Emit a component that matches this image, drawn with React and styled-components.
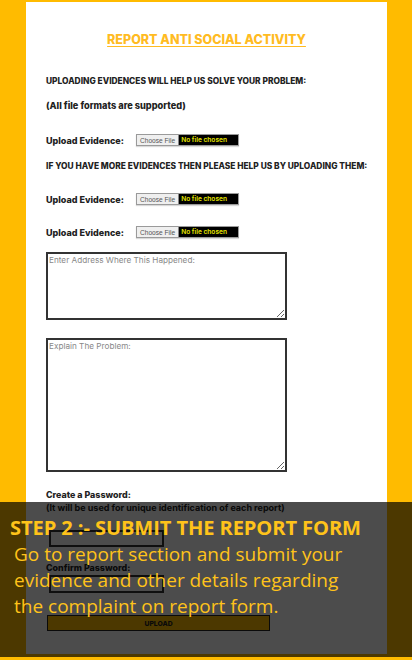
import React from "react"
import styled, { createGlobalStyle } from "styled-components"

const GlobalStyle = createGlobalStyle`
  html, body {
    margin: 0;
    padding: 0;
    background: #ffbb00;
  }
  * {
    box-sizing: border-box;
  }
`

const Page = styled.div`
  position: relative;
  width: 412px;
  height: 660px;
  overflow: hidden;
  background: #ffbb00;
  padding-top: 2px;
`

const Card = styled.div`
  display: flex;
  flex-direction: column;
  align-items: flex-start;
  margin-left: 26px;
  width: 361px;
  height: 652px;
  background: #fff;
  padding: 30px 0 0 20px;
  font-family: "Inter", "Open Sans", sans-serif;
`

const Title = styled.h1`
  align-self: center;
  margin: 0 0 0 -20px;
  font-size: 12.5px;
  line-height: 16px;
  font-weight: 800;
  color: #ffbb22;
  text-decoration: underline;
  text-underline-offset: 2px;
`

const Note = styled.p`
  margin: ${(p) => p.$top}px 0 0;
  font-size: ${(p) => p.$size || 8.4}px;
  line-height: 12px;
  font-weight: ${(p) => p.$weight || 800};
  color: #222;
  white-space: nowrap;
`

const UploadRow = styled.div`
  display: flex;
  align-items: center;
  margin-top: ${(p) => p.$top}px;
  height: 14px;
`

const Label = styled.span`
  width: 90px;
  font-size: 9px;
  font-weight: 800;
  color: #222;
`

const FileBox = styled.div`
  display: flex;
  height: 12px;
  border: 1px solid #9a9a9a;
  box-shadow: 0 1px 1px rgba(0, 0, 0, 0.15);
`

const ChooseButton = styled.span`
  display: flex;
  align-items: center;
  padding: 0 3px;
  background: #efefef;
  font-family: "Liberation Sans", sans-serif;
  font-size: 6.6px;
  color: #555;
  border-right: 1px solid #888;
`

const Chosen = styled.span`
  display: flex;
  align-items: center;
  padding: 0 3px 0 2px;
  width: 59px;
  background: #000;
  font-size: 6.6px;
  font-weight: 600;
  color: #e6e600;
`

const TextArea = styled.textarea`
  margin-top: ${(p) => p.$top}px;
  width: 241px;
  height: ${(p) => p.$height}px;
  border: 2px solid #333;
  padding: 1px;
  font-family: "Inter", sans-serif;
  font-size: 8.2px;
  resize: vertical;
  background: #fff;

  &::placeholder {
    color: #888;
  }
`

const PasswordInput = styled.input`
  margin: ${(p) => p.$top}px 0 0 3px;
  width: 115px;
  height: ${(p) => p.$height}px;
  border: 2px solid #333;
  background: #fff;
`

const SubmitButton = styled.button`
  margin: 22px 0 0 1px;
  width: 223px;
  height: 16px;
  border: 1.5px solid #222;
  background: #ffbb00;
  font-family: "Inter", sans-serif;
  font-size: 6.8px;
  font-weight: 800;
  color: #222;
  padding: 0;
`

const Overlay = styled.div`
  position: absolute;
  left: 0;
  top: 502px;
  width: 412px;
  height: 155px;
  background: rgba(0, 0, 0, 0.7);
  padding: 12px 0 0 10px;
  font-family: "Open Sans", sans-serif;
  color: #ffc31a;
`

const StepTitle = styled.h2`
  margin: 0;
  font-size: 20.1px;
  line-height: 27px;
  font-weight: 700;
  letter-spacing: -0.1px;
`

const StepText = styled.p`
  margin: 0 0 0 4px;
  font-size: 19px;
  line-height: 26px;
  font-weight: 400;
  width: 345px;
`

const Upload = ({ top }) => (
  <UploadRow $top={top}>
    <Label>Upload Evidence:</Label>
    <FileBox>
      <ChooseButton>Choose File</ChooseButton>
      <Chosen>No file chosen</Chosen>
    </FileBox>
  </UploadRow>
)

export default function App() {
  return (
    <Page>
      <GlobalStyle />
      <Card>
        <Title>REPORT ANTI SOCIAL ACTIVITY</Title>
        <Note $top={27}>UPLOADING EVIDENCES WILL HELP US SOLVE YOUR PROBLEM:</Note>
        <Note $top={13} $size={9.2}>(All file formats are supported)</Note>
        <Upload top={21} />
        <Note $top={13}>IF YOU HAVE MORE EVIDENCES THEN PLEASE HELP US BY UPLOADING THEM:</Note>
        <Upload top={20} />
        <Upload top={19} />
        <TextArea $top={13} $height={68} placeholder="Enter Address Where This Happened:" />
        <TextArea $top={18} $height={134} placeholder="Explain The Problem:" />
        <Note $top={17} $size={8.9}>Create a Password:</Note>
        <Note $top={1} $size={9} $weight={700}>(It will be used for unique identification of each report)</Note>
        <PasswordInput $top={16} $height={17} type="password" />
        <Note $top={15} $size={8.9}>Confirm Password:</Note>
        <PasswordInput $top={1} $height={18} type="password" />
        <SubmitButton>UPLOAD</SubmitButton>
      </Card>
      <Overlay>
        <StepTitle>STEP 2 :- SUBMIT THE REPORT FORM</StepTitle>
        <StepText>
          Go to report section and submit your evidence and other details regarding the
          complaint on report form.
        </StepText>
      </Overlay>
    </Page>
  )
}
